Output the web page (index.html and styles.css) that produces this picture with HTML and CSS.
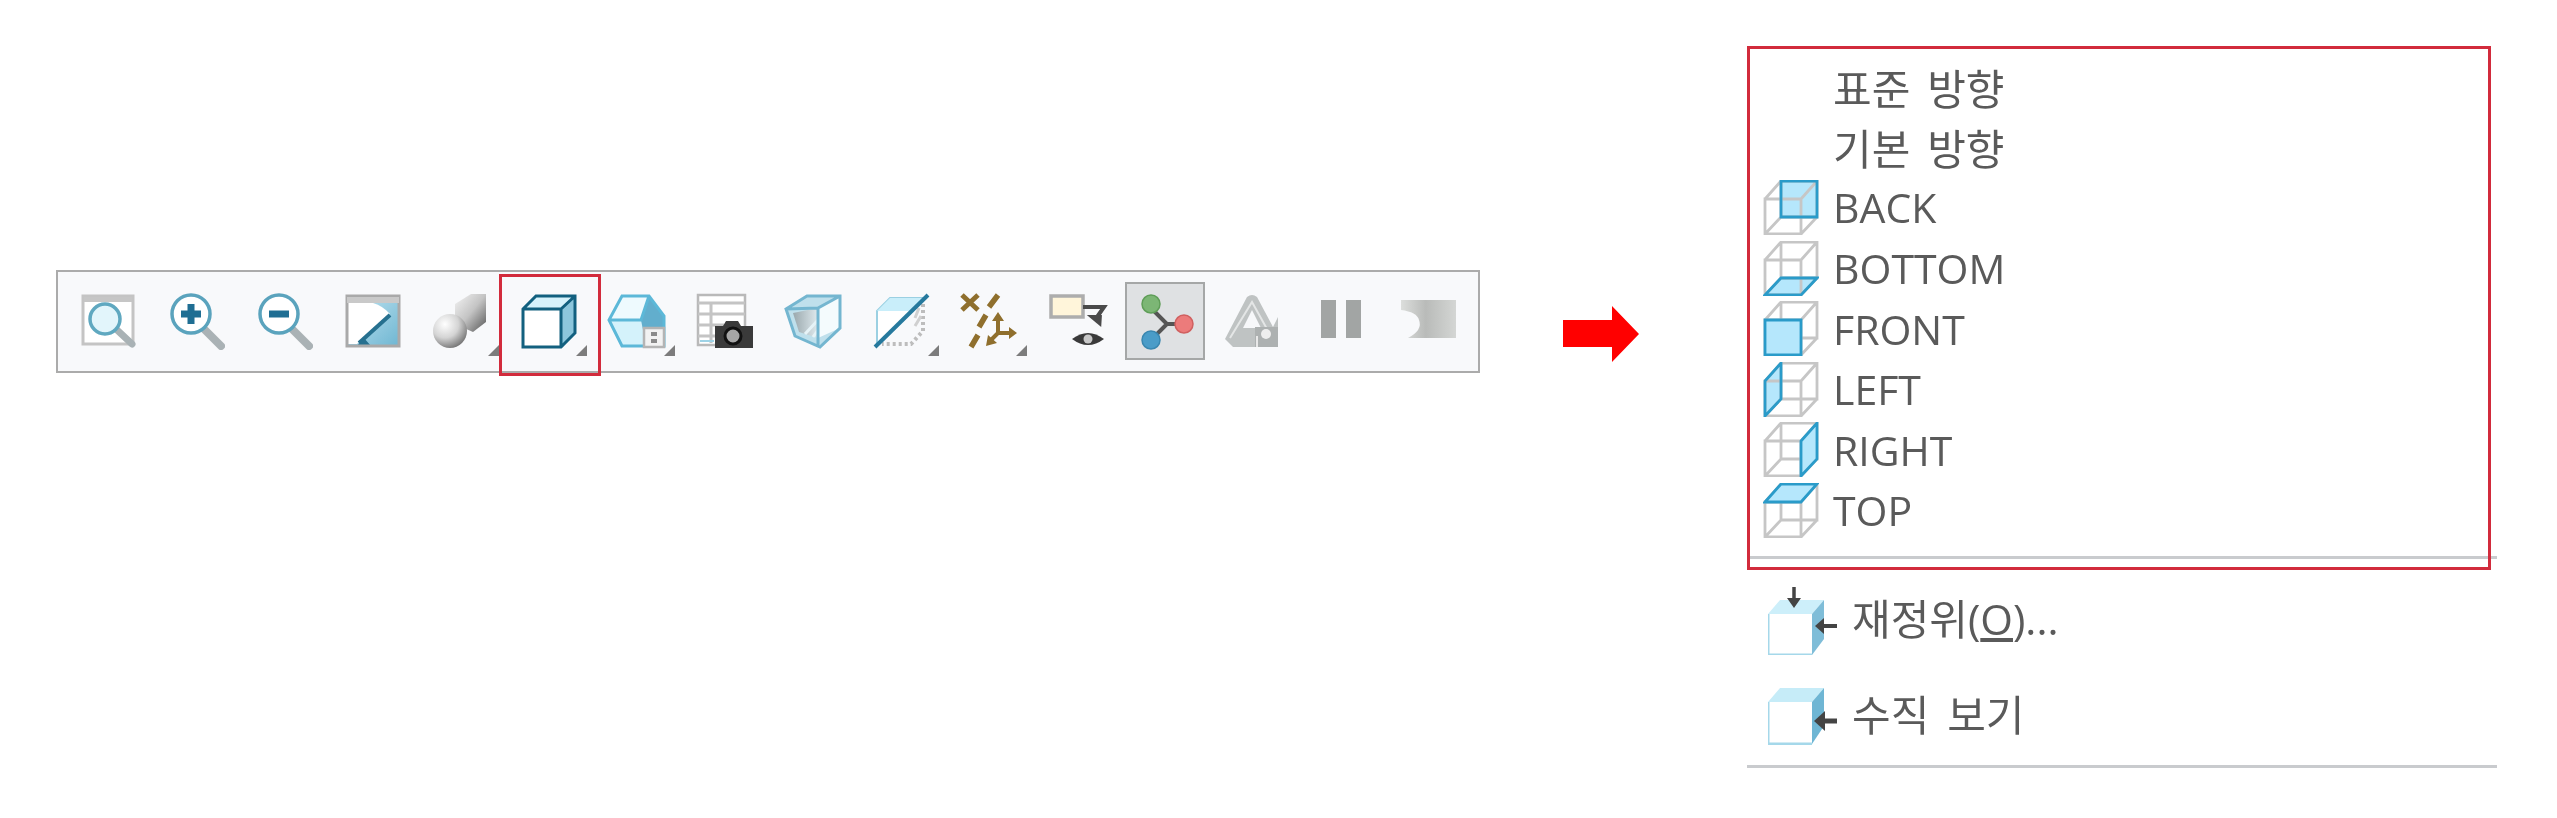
FILE: index.html
```html
<!DOCTYPE html>
<html lang="ko">
<head>
<meta charset="utf-8">
<title>보기 방향</title>
<link rel="stylesheet" href="styles.css">
</head>
<body>
<svg class="defs" width="0" height="0" aria-hidden="true">
  <defs>
    <g id="wire">
      <path d="M18 1h36v36H18zM2 19h36v35H2zM2 19 18 1M38 19 54 1M2 54 18 37M38 54 54 37" fill="none" stroke="#c6c6c6" stroke-width="2.8"/>
    </g>
    <linearGradient id="g1" x1="0" y1="0" x2="1" y2="1"><stop offset="0" stop-color="#f4f4f4"/><stop offset=".5" stop-color="#c4c4c4"/><stop offset="1" stop-color="#555"/></linearGradient>
    <radialGradient id="g3" cx=".35" cy=".3" r=".8"><stop offset="0" stop-color="#fff"/><stop offset=".5" stop-color="#d4d4d4"/><stop offset="1" stop-color="#666"/></radialGradient>
    <linearGradient id="g2" x1="0" x2="1" y1="0" y2="0"><stop offset="0" stop-color="#dcdedc"/><stop offset=".45" stop-color="#b9bbb9"/><stop offset="1" stop-color="#d4d6d4"/></linearGradient>
    <linearGradient id="g4" x1="0" x2="1" y1="0" y2="1"><stop offset="0" stop-color="#c4e6f2"/><stop offset="1" stop-color="#6fb6d2"/></linearGradient>
    <linearGradient id="g5" x1="0" x2="1" y1="0" y2="0"><stop offset="0" stop-color="#9aa8ad"/><stop offset="1" stop-color="#dfeaee"/></linearGradient>
  </defs>
</svg>
<main class="page">
  <section class="left">
    <div class="toolbar">
      <span class="tool"><svg class="ico" viewBox="0 0 56 54"><path d="M2 2h50v48H2z" fill="#fff" stroke="#c4c4c4" stroke-width="3"/><path d="M3 3h48v5H3z" fill="#c6c6c6"/><path d="M35 35 51 50" stroke="#a9b2b5" stroke-width="7" stroke-linecap="round"/><circle cx="24" cy="25" r="15" fill="#e2f5fb" stroke="#5fa8c0" stroke-width="3.5"/></svg></span>
      <span class="tool"><svg class="ico" viewBox="0 0 56 54"><path d="M34 34 52 52" stroke="#aab2b5" stroke-width="8" stroke-linecap="round"/><circle cx="22" cy="20" r="19" fill="#fff" stroke="#5aa3bd" stroke-width="3.5"/><path d="M22 10v20M12 20h20" stroke="#1f6e93" stroke-width="7"/></svg></span>
      <span class="tool"><svg class="ico" viewBox="0 0 56 54"><path d="M34 34 52 52" stroke="#aab2b5" stroke-width="8" stroke-linecap="round"/><circle cx="22" cy="20" r="19" fill="#fff" stroke="#5aa3bd" stroke-width="3.5"/><path d="M12 20h20" stroke="#1f6e93" stroke-width="7"/></svg></span>
      <span class="tool"><svg class="ico" viewBox="0 0 56 54"><path d="M2 2h52v50H2z" fill="url(#g4)"/><path d="M3 9H28Q38 12 45 20L12 50H3z" fill="#fff"/><path d="M14 49 45 21" stroke="#26708f" stroke-width="4"/><path d="M12 52h14l-7-8z" fill="#26708f"/><path d="M2 2h52v50H2z" fill="none" stroke="#a9a9a9" stroke-width="3"/><path d="M2 3h52v6H2z" fill="#c9c9c9"/></svg></span>
      <span class="tool corner"><svg class="ico" viewBox="0 0 56 54"><path d="M22 10 38 0h15v28L40 38 22 30z" fill="url(#g1)"/><circle cx="17" cy="37" r="17" fill="url(#g3)"/></svg></span>
      <span class="tool corner"><svg class="ico" viewBox="0 0 56 54"><path d="M2 15 15 2h39v37L40 53H2z" fill="#fff"/><path d="M2 15 15 2h39L40 15z" fill="#d6f2fb"/><path d="M40 15 54 2v37L40 53z" fill="#8cc6dc"/><path d="M2 15 15 2h39v37L40 53H2zM2 15h38v38M40 15 54 2" fill="none" stroke="#12607f" stroke-width="3"/></svg></span>
      <span class="tool corner"><svg class="ico" viewBox="0 0 56 54"><path d="M13 2h27l15 22v28H13L0 26z" fill="#d4f2fb"/><path d="M0 26 13 2h27l-8 24z" fill="#eefafe"/><path d="M40 2 32 26l2 10h21V22z" fill="#62aecd"/><path d="M13 2h27l15 20v30H13L0 26zM0 26h32L40 2" fill="none" stroke="#5cb8d8" stroke-width="3"/><path d="M35 34h20v19H35z" fill="#f2f2f2" stroke="#b4b4b4" stroke-width="2.5"/><path d="M42 38h6v4h-6zM42 45h6v4h-6z" fill="#8a8a8a"/></svg></span>
      <span class="tool"><svg class="ico" viewBox="0 0 56 54"><path d="M1 1h47v50H1z" fill="#fff" stroke="#b9b9b9" stroke-width="2.5"/><path d="M1 9h47M1 20h47M1 31h26M1 42h18M14 9v40" stroke="#c4c4c4" stroke-width="3"/><path d="M3 47h14" stroke="#9fd3e6" stroke-width="2"/><path d="M18 32h8l3-5h12l3 5h12v22H18z" fill="#3a3a3a"/><circle cx="36" cy="42" r="8" fill="#a6a6a6" stroke="#111" stroke-width="3"/></svg></span>
      <span class="tool"><svg class="ico" viewBox="0 0 56 54"><path d="M1 15 22 2h33v32L35 53 10 42z" fill="#bfe0ec"/><path d="M8 19 33 14v30L14 38z" fill="url(#g5)"/><path d="M33 14 55 2v32L33 44z" fill="#f4fbfd"/><path d="M20 40 33 26M28 43 33 36" stroke="#e6f3f7" stroke-width="3"/><path d="M1 15 22 2h33v32L35 53 10 42zM1 15l32-1L55 2M33 14v39" fill="none" stroke="#74b6d0" stroke-width="3"/></svg></span>
      <span class="tool corner"><svg class="ico" viewBox="0 0 56 54"><path d="M4 17 17 4h36L4 52z" fill="#fff" stroke="#9bd0e2" stroke-width="2"/><path d="M4 17 17 4h36L39 17z" fill="#c9eefa"/><path d="M50 10v27L38 50H9" fill="none" stroke="#bdbdbd" stroke-width="4" stroke-dasharray="3 3"/><path d="M46 14 42 24M48 22 42 32" stroke="#d0d0d0" stroke-width="3"/><path d="M2 53 55 1" stroke="#26799d" stroke-width="4"/></svg></span>
      <span class="tool corner"><svg class="ico" viewBox="0 0 56 54"><g stroke="#8f6f2d" fill="none" stroke-width="5"><path d="M1 1 17 16M17 1 1 16"/><path d="M37 1 28 13M25 21 18 33M17 41 10 53" stroke-width="5.5"/><path d="M37 24v15M37 39H52M37 39 29 47" stroke-width="4"/></g><path d="M37 18l-6 9h12zM56 39l-8-6v12zM25 52l2-11 9 8z" fill="#8f6f2d"/></svg></span>
      <span class="tool"><svg class="ico" viewBox="0 0 56 54"><path d="M2 2h32v21H2z" fill="#fff5da" stroke="#adadad" stroke-width="3.5"/><path d="M34 13h21l-9 13" fill="none" stroke="#4a4a4a" stroke-width="4"/><path d="M37 22l16 10-1-12z" fill="#4a4a4a" transform="rotate(8 45 27)"/><path d="M23 45Q39 33 55 45 39 57 23 45z" fill="#3a3a3a"/><circle cx="39" cy="45" r="4.5" fill="#c8c8c8"/></svg></span>
      <span class="tool active"><svg class="ico" viewBox="0 0 56 54"><path d="M14 14 30 30 14 46M30 30h20" fill="none" stroke="#555" stroke-width="4"/><circle cx="14" cy="10" r="9" fill="#7cb675" stroke="#5f9e58" stroke-width="1.5"/><circle cx="47" cy="30" r="9" fill="#ec7b7b" stroke="#d06060" stroke-width="1.5"/><circle cx="14" cy="46" r="9" fill="#4a9cc8" stroke="#3a87b0" stroke-width="1.5"/></svg></span>
      <span class="tool"><svg class="ico" viewBox="0 0 56 54"><path d="M0 45 22 3q5-4 10 0l16 30 5-10v30H8z" fill="#bfc3c3"/><path d="M5 44 27 8l20 36" fill="none" stroke="#e4e6e6" stroke-width="2"/><path d="M18 34 27 16l9 18z" fill="#f7f8fa"/><path d="M30 33h23v20H30z" fill="#adb1b1"/><circle cx="41" cy="40" r="5" fill="#eee"/><path d="M32 42v11" stroke="#e8e8e8" stroke-width="2"/></svg></span>
      <span class="tool"><svg class="ico" viewBox="0 0 56 54"><path d="M8 6h15v38H8zM33 6h15v38H33z" fill="#a2a5a4"/></svg></span>
      <span class="tool"><svg class="ico" viewBox="0 0 56 54"><path d="M0 6h55v38H7Q22 36 18 26 16 18 0 16z" fill="url(#g2)"/></svg></span>
      <span class="mark mark-tool"></span>
    </div>
    <svg class="arrow" viewBox="0 0 76 56" aria-hidden="true"><path d="M0 14h49V0l27 28-27 28V41H0z" fill="#f00"/></svg>
  </section>
  <section class="menu">
    <span class="mark mark-menu"></span>
    <ul class="views">
      <li class="row ko"><span class="slot"></span>표준 방향</li>
      <li class="row ko"><span class="slot"></span>기본 방향</li>
      <li class="row"><svg class="slot" viewBox="0 0 56 55"><path class="face" d="M18 1h36v36H18z"/><use href="#wire"/><path class="edge" d="M18 1h36v36H18z"/></svg>BACK</li>
      <li class="row"><svg class="slot" viewBox="0 0 56 55"><path class="face" d="M2 54 18 37h36L38 54z"/><use href="#wire"/><path class="edge" d="M2 54 18 37h36L38 54z"/></svg>BOTTOM</li>
      <li class="row"><svg class="slot" viewBox="0 0 56 55"><use href="#wire"/><path class="face" d="M2 19h36v35H2z"/><path class="edge" d="M2 19h36v35H2z"/></svg>FRONT</li>
      <li class="row"><svg class="slot" viewBox="0 0 56 55"><path class="face" d="M2 19 18 1v36L2 54z"/><use href="#wire"/><path class="edge" d="M2 19 18 1v36L2 54z"/></svg>LEFT</li>
      <li class="row"><svg class="slot" viewBox="0 0 56 55"><use href="#wire"/><path class="face" d="M38 19 54 1v36L38 54z"/><path class="edge" d="M38 19 54 1v36L38 54z"/></svg>RIGHT</li>
      <li class="row"><svg class="slot" viewBox="0 0 56 55"><use href="#wire"/><path class="face" d="M2 19 18 1h36L38 19z"/><path class="edge" d="M2 19 18 1h36L38 19z"/></svg>TOP</li>
    </ul>
    <div class="sep mid"></div>
    <div class="action first">
      <svg class="act-ico" viewBox="0 0 70 68"><path d="M0 27 12 13h44v39L44 68H0z" fill="#fff"/><path d="M0 27 12 13h44L44 27z" fill="#cdeffa"/><path d="M44 27 56 13v39L44 68z" fill="#7fbdd8"/><path d="M0 27v41h44" fill="none" stroke="#a5d8ea" stroke-width="3"/><path d="M26 0v14" stroke="#444" stroke-width="3.5"/><path d="M19 11h14l-7 10zM56 31v16l-9-8z" fill="#444"/><path d="M52 39h17" stroke="#444" stroke-width="4"/></svg>
      <span class="action-text">재정위(<u>O</u>)...</span>
    </div>
    <div class="action">
      <svg class="act-ico short" viewBox="0 0 70 57"><path d="M0 14 12 0h44v38L44 56H0z" fill="#fff"/><path d="M0 14 12 0h44L44 14z" fill="#c6ecf8"/><path d="M44 14 56 0v38L44 56z" fill="#6fb6d4"/><path d="M0 14v42h44" fill="none" stroke="#a5d8ea" stroke-width="3"/><path d="M52 33h17" stroke="#444" stroke-width="5"/><path d="M57 23v20l-11-10z" fill="#444"/></svg>
      <span class="action-text">수직 보기</span>
    </div>
    <div class="sep"></div>
  </section>
</main>
</body>
</html>
```
FILE: styles.css
```css
* { box-sizing: border-box; }
html, body { margin: 0; height: 100%; background: #fff; }
.defs { position: absolute; }
.page { display: flex; width: 2557px; height: 818px; overflow: hidden; font-family: "Open Sans", "Noto Sans CJK KR", sans-serif; color: #5a5a5a; }
.left { display: flex; flex: none; align-items: center; padding: 270px 0 0 56px; height: 372px; }
.toolbar { position: relative; flex: none; display: flex; align-items: center; width: 1424px; height: 103px; padding: 0 7px; background: #f8f9fb; border: 2px solid #ababab; }
.tool { position: relative; flex: none; display: flex; align-items: center; justify-content: center; width: 88px; height: 78px; }
.ico { width: 56px; height: 54px; overflow: visible; filter: blur(.7px); }
.corner::after { content: ""; position: absolute; right: 6px; bottom: 4px; width: 0; height: 0; border-left: 11px solid transparent; border-bottom: 11px solid #7c7c7c; filter: blur(.5px); }
.active { background: #dfe1e3; border: 2px solid #a5a7a7; width: 80px; margin: 0 4px; }
.mark { position: absolute; border: 3px solid #d22b3c; pointer-events: none; }
.mark-tool { left: 441px; top: 2px; width: 102px; height: 102px; }
.arrow { flex: none; width: 76px; height: 56px; margin: 26px 0 0 83px; }
.menu { position: relative; flex: none; width: 750px; margin-left: 108px; padding: 56px 0 0 16px; }
.mark-menu { left: 0; top: 46px; width: 744px; height: 524px; }
.views { list-style: none; margin: 0; padding: 0; }
.row { display: flex; align-items: center; height: 60.6px; font-size: 41px; filter: blur(.4px); }
.row.ko { font-size: 42px; word-spacing: 6px; }
.slot { flex: none; width: 56px; height: 55px; margin-right: 14px; }
.face { fill: #b5e7fc; }
.edge { fill: none; stroke: #2a9bc9; stroke-width: 2.8; }
.sep { height: 3px; margin: 0 0 0 -16px; background: #c9cbce; width: 750px; }
.sep.mid { margin-top: 15px; }
.action { display: flex; align-items: center; height: 96px; padding-left: 5px; font-size: 42px; word-spacing: 7px; filter: blur(.4px); }
.action.first { margin-top: 14px; }
.action-text { margin-bottom: 9px; }
.act-ico { flex: none; width: 70px; height: 68px; margin-right: 14px; }
.act-ico.short { height: 57px; }
```
